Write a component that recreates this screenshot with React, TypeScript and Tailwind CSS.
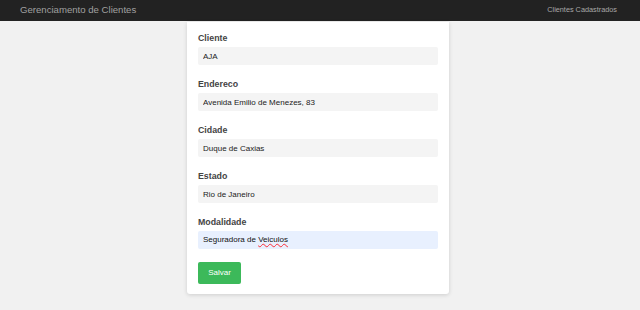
import React from 'react'

const fields = [
  { label: 'Cliente', value: 'AJA' },
  { label: 'Endereco', value: 'Avenida Emilio de Menezes, 83' },
  { label: 'Cidade', value: 'Duque de Caxias' },
  { label: 'Estado', value: 'Rio de Janeiro' },
]

const App = () => {
  return (
    <div className="min-h-[310px] bg-[#f1f1f1] font-['Liberation_Sans',Arial,sans-serif]">
      <nav className="flex h-[21px] items-center justify-between bg-[#222222] pl-[20px] pr-[23px]">
        <span className="text-[9.6px] text-[#a0a0a0]">Gerenciamento de Clientes</span>
        <span className="text-[7.3px] text-[#a8a8a8]">Clientes Cadastrados</span>
      </nav>

      <div className="mx-auto mt-px w-[262px] -translate-x-[2px] rounded-b-[3px] bg-white px-[11px] pt-[8px] pb-[10px] shadow-[0_1px_4px_rgba(0,0,0,0.15)]">
        {fields.map((f) => (
          <div key={f.label} className="mb-[11px]">
            <label className="mb-px block h-[16px] text-[8.8px] font-bold leading-[16px] text-[#444]">{f.label}</label>
            <input
              readOnly
              value={f.value}
              className="block h-[18px] w-full rounded-[2px] bg-[#f4f4f4] px-[5px] text-[8px] text-[#222] outline-none"
            />
          </div>
        ))}
        <div className="mb-[13px]">
          <label className="mb-px block h-[16px] text-[8.8px] font-bold leading-[16px] text-[#444]">Modalidade</label>
          <div className="flex h-[18px] w-full items-center rounded-[2px] bg-[#e8f0fe] px-[5px] text-[8px] text-[#111]">
            Seguradora de&nbsp;<span className="underline decoration-wavy decoration-red-500 decoration-[0.5px]">Veiculos</span>
          </div>
        </div>
        <button className="block h-[22px] w-[43px] rounded-[2px] bg-[#3cb95a] text-[8px] text-white">Salvar</button>
      </div>
    </div>
  )
}

export default App
